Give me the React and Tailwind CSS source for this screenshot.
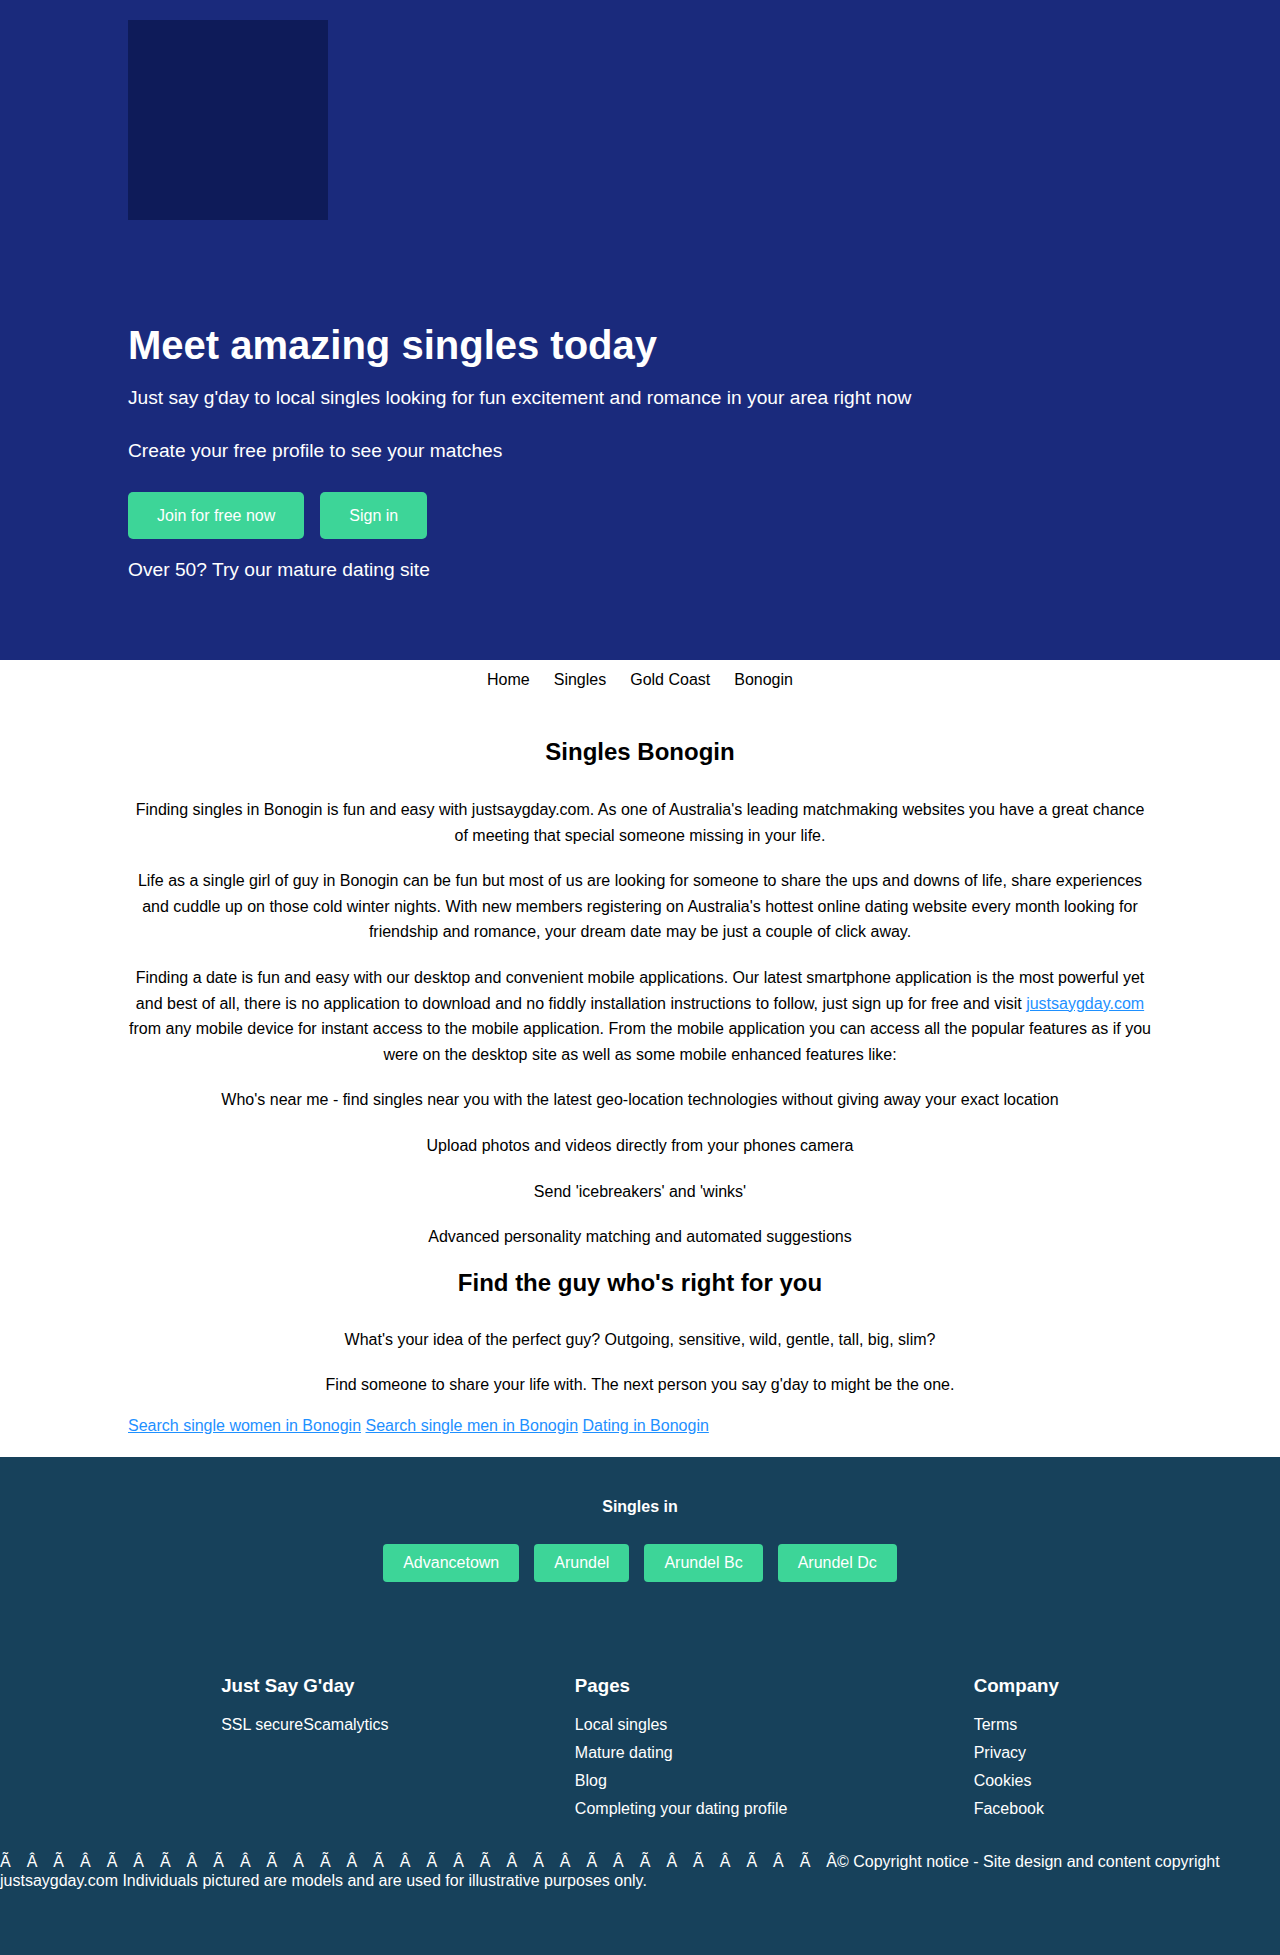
import React from "react";

const features = [
  "Who's near me - find singles near you with the latest geo-location technologies without giving away your exact location",
  "Upload photos and videos directly from your phones camera",
  "Send 'icebreakers' and 'winks'",
  "Advanced personality matching and automated suggestions",
];

export default function App() {
  const garble = Array.from({ length: 31 }, (_, i) => (i % 2 ? "Â" : "Ã"));
  return (
    <div className="font-['Liberation_Sans',Arial,sans-serif] text-black bg-white">
      {/* Hero */}
      <header className="bg-[#1a2a7c] text-white h-[660px]">
        <div className="max-w-[1024px] mx-auto pt-[20px]">
          <div className="w-[200px] h-[200px] bg-[#0e1b59]" />
          <h1 className="mt-[101px] text-[40px] leading-[48px] font-bold">Meet amazing singles today</h1>
          <p className="mt-[17px] text-[19.2px] leading-[24px]">
            Just say g'day to local singles looking for fun excitement and romance in your area right now
          </p>
          <p className="mt-[29px] text-[19.2px] leading-[24px]">Create your free profile to see your matches</p>
          <div className="mt-[29px] flex gap-4">
            <a className="h-[47px] px-[29px] flex items-center bg-[#3dd598] rounded-[5px] text-[16px] text-white">
              Join for free now
            </a>
            <a className="h-[47px] px-[29px] flex items-center bg-[#3dd598] rounded-[5px] text-[16px] text-white">
              Sign in
            </a>
          </div>
          <p className="mt-[19px] text-[19.2px] leading-[24px]">Over 50? Try our mature dating site</p>
        </div>
      </header>

      {/* Nav */}
      <nav className="h-[40px] flex items-center justify-center gap-6 text-[16px] leading-[24px]">
        <a>Home</a>
        <a>Singles</a>
        <a>Gold Coast</a>
        <a>Bonogin</a>
      </nav>

      {/* Main */}
      <main className="max-w-[1024px] mx-auto pt-[37px] pb-[22px] text-center text-[16px]">
        <h2 className="text-[24px] leading-[29px] font-bold mb-[31px]">Singles Bonogin</h2>
        <div className="leading-[25.6px] flex flex-col gap-[20px]">
          <p>
            Finding singles in Bonogin is fun and easy with justsaygday.com. As one of Australia's leading matchmaking websites you have a great chance of meeting that special someone missing in your life.
          </p>
          <p>
            Life as a single girl of guy in Bonogin can be fun but most of us are looking for someone to share the ups and downs of life, share experiences and cuddle up on those cold winter nights. With new members registering on Australia's hottest online dating website every month looking for friendship and romance, your dream date may be just a couple of click away.
          </p>
          <p>
            Finding a date is fun and easy with our desktop and convenient mobile applications. Our latest smartphone application is the most powerful yet and best of all, there is no application to download and no fiddly installation instructions to follow, just sign up for free and visit{" "}
            <a className="text-[#1e90ff] underline">justsaygday.com</a> from any mobile device for instant access to the mobile application. From the mobile application you can access all the popular features as if you were on the desktop site as well as some mobile enhanced features like:
          </p>
          {features.map((f) => (
            <p key={f}>{f}</p>
          ))}
        </div>
        <h2 className="mt-[18px] text-[24px] leading-[29px] font-bold mb-[30px]">Find the guy who's right for you</h2>
        <div className="leading-[25.6px] flex flex-col gap-[20px]">
          <p>What's your idea of the perfect guy? Outgoing, sensitive, wild, gentle, tall, big, slim?</p>
          <p>Find someone to share your life with. The next person you say g'day to might be the one.</p>
        </div>
        <div className="mt-[19px] text-left leading-[18px]">
          <a className="text-[#1e90ff] underline">Search single women in Bonogin</a>{" "}
          <a className="text-[#1e90ff] underline">Search single men in Bonogin</a>{" "}
          <a className="text-[#1e90ff] underline">Dating in Bonogin</a>
        </div>
      </main>

      {/* Footer */}
      <footer className="bg-[#17415b] text-white text-[16px] pt-[41px] pb-[68px]">
        <h4 className="text-center font-bold leading-[18px]">Singles in</h4>
        <div className="mt-[28px] flex justify-center gap-[15px]">
          {["Advancetown", "Arundel", "Arundel Bc", "Arundel Dc"].map((t) => (
            <a key={t} className="h-[38px] px-5 flex items-center bg-[#3dd598] rounded-[4px] text-white">
              {t}
            </a>
          ))}
        </div>
        <div className="max-w-[1024px] mx-auto mt-[93px] flex justify-around">
          <div>
            <h3 className="text-[18.72px] leading-[22px] font-bold">Just Say G'day</h3>
            <div className="mt-[14px] leading-[28px]">SSL secureScamalytics</div>
          </div>
          <div>
            <h3 className="text-[18.72px] leading-[22px] font-bold">Pages</h3>
            <ul className="mt-[14px] leading-[28px]">
              <li>Local singles</li>
              <li>Mature dating</li>
              <li>Blog</li>
              <li>Completing your dating profile</li>
            </ul>
          </div>
          <div>
            <h3 className="text-[18.72px] leading-[22px] font-bold">Company</h3>
            <ul className="mt-[14px] leading-[28px]">
              <li>Terms</li>
              <li>Privacy</li>
              <li>Cookies</li>
              <li>Facebook</li>
            </ul>
          </div>
        </div>
        <p className="mt-[29px] leading-[19px]">
          {garble.map((g, i) => (
            <span key={i} className="inline-block w-[26.67px]">
              {g}
            </span>
          ))}
          Â© Copyright notice - Site design and content copyright justsaygday.com Individuals pictured are models and are used for illustrative purposes only.
        </p>
      </footer>
    </div>
  );
}
